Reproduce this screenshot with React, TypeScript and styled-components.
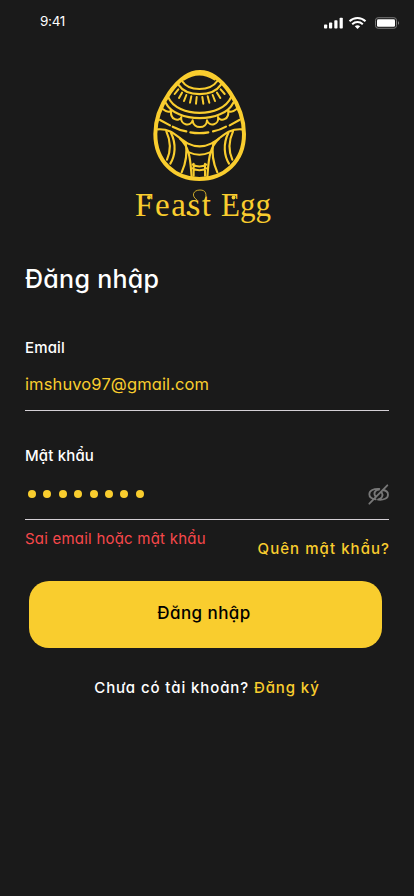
import React from 'react';
import styled, { createGlobalStyle } from 'styled-components';

const GlobalStyle = createGlobalStyle`
  * { box-sizing: border-box; }
  body { margin: 0; background: #1a1a1a; }
`;

const Screen = styled.main`
  width: 414px;
  height: 896px;
  overflow: hidden;
  background: #1a1a1a;
  color: #fff;
  display: flex;
  flex-direction: column;
  font-family: Inter, 'Noto Sans', sans-serif;
  font-feature-settings: 'cv11' 1, 'ss03' 1;
`;

const StatusBar = styled.header`
  height: 44px;
  padding: 0 15px 0 40px;
  display: flex;
  justify-content: space-between;
`;

const Clock = styled.time`
  font-size: 13.5px;
  line-height: 17px;
  padding-top: 13px;
  font-weight: 400;
  letter-spacing: -0.3px;
`;

const StatusIcons = styled.svg`
  width: 78px;
  height: 14px;
  margin-top: 16px;
`;

const Brand = styled.div`
  height: 186px;
  padding-top: 16px;
  display: flex;
  flex-direction: column;
  align-items: center;
  color: #f9cd2e;
`;

const Egg = styled.svg`
  width: 120px;
  height: 125px;
  margin-right: 14px;
  flex: none;
`;

const Wordmark = styled.svg`
  width: 155px;
  height: 50px;
  margin-top: -5px;
  margin-right: 9px;
  flex: none;
`;

const Form = styled.form`
  padding: 0 25px;
  display: flex;
  flex-direction: column;
`;

const Title = styled.h1`
  margin: 27px 0 0;
  height: 45px;
  line-height: 45px;
  font-size: 25px;
  font-weight: 500;
  letter-spacing: 0.3px;
  white-space: nowrap;
`;

const Field = styled.div<{ $top: number; $height: number }>`
  margin-top: ${(p) => p.$top}px;
  height: ${(p) => p.$height}px;
  border-bottom: 1px solid #d4d0d5;
  display: flex;
  flex-direction: column;
`;

const Label = styled.label`
  height: 20px;
  line-height: 20px;
  font-size: 15px;
  font-weight: 500;
  letter-spacing: 0.15px;
`;

const Value = styled.div`
  margin-top: 15px;
  height: 22px;
  line-height: 22px;
  font-size: 16.5px;
  letter-spacing: 0.12px;
  color: #f9cd2e;
`;

const PasswordRow = styled.div`
  margin-top: 17px;
  height: 22px;
  display: flex;
  align-items: center;
  justify-content: space-between;
`;

const Dots = styled.div`
  display: flex;
  gap: 7.4px;
  padding: 0 0 1px 3px;
`;

const Dot = styled.span`
  width: 8px;
  height: 8px;
  border-radius: 50%;
  background: #f9cd2e;
`;

const EyeOff = styled.svg`
  width: 21px;
  height: 21px;
`;

const Notes = styled.div`
  height: 61px;
  display: flex;
  justify-content: space-between;
  white-space: nowrap;
`;

const ErrorText = styled.span`
  padding-top: 9px;
  line-height: 20px;
  font-size: 15px;
  letter-spacing: 0.22px;
  color: #f7484b;
`;

const Forgot = styled.a`
  padding-top: 19px;
  margin-right: -1px;
  line-height: 20px;
  font-size: 15px;
  font-weight: 500;
  letter-spacing: 1.05px;
  color: #f9cd2e;
`;

const Submit = styled.button`
  margin: 0 7px 0 4px;
  height: 67px;
  padding: 0 3px 4px 0;
  border: 0;
  border-radius: 20px;
  background: #f9cd2e;
  color: #000;
  font: inherit;
  font-feature-settings: inherit;
  font-size: 17px;
  font-weight: 500;
  letter-spacing: 0.42px;
`;

const SignUp = styled.p`
  margin: 30px 0 0;
  line-height: 20px;
  text-align: center;
  font-size: 15px;
  font-weight: 500;
  letter-spacing: 0.9px;
  white-space: nowrap;
`;

const SignUpLink = styled.a`
  color: #f9cd2e;
`;

export default function App() {
  return (
    <Screen>
      <GlobalStyle />
      <StatusBar>
        <Clock>9:41</Clock>
        <StatusIcons viewBox="0 0 78 14" fill="#fff">
          <rect x="3" y="8.5" width="3.2" height="4" rx="0.8" />
          <rect x="8" y="6.5" width="3.2" height="6" rx="0.8" />
          <rect x="13.3" y="4.3" width="3.2" height="8.2" rx="0.8" />
          <rect x="18.6" y="1.7" width="3.2" height="10.8" rx="0.8" />
          <g fill="none" stroke="#fff" strokeWidth="2">
            <path d="M28.5 5.3 C33 1 40 1 44.5 5.3" />
            <path d="M31.2 8.2 C34.3 5.3 38.7 5.3 41.8 8.2" />
          </g>
          <path d="M33.8 10.3 C35.3 8.9 37.7 8.9 39.2 10.3 L36.5 13 Z" />
          <rect x="54.5" y="1.7" width="21" height="10.6" rx="2.6" fill="none" stroke="#777" />
          <rect x="56" y="3.2" width="18" height="7.6" rx="1.3" />
          <path d="M77 5.2 C78.3 5.8 78.3 8.2 77 8.8 Z" fill="#888" />
        </StatusIcons>
      </StatusBar>

      <Brand>
        <Egg viewBox="0 0 360 375" fill="none" stroke="currentColor" strokeWidth="6.5" strokeLinecap="round">
          <path strokeWidth="12" d="M180 36 C245 36 312 140 312 222 C312 305 252 357 178 357 C105 357 46 305 46 222 C46 140 115 36 180 36Z" />
          <path d="M132 58 Q178 28 224 58" />
          <path d="M126 63 C146 95 210 95 232 63" />
          <path d="M115 74 C140 112 217 112 243 74" />
          <path strokeWidth="6" d="M115 88 L104 102 M126 98 L117 114 M139 105 L132 123 M154 109 L150 128 M170 111 L168 131 M187 111 L190 131 M203 109 L208 128 M218 105 L225 123 M231 98 L241 114 M242 88 L254 102" />
          <path d="M85 112 C112 174 246 174 273 112" />
          <path d="M77 128 C108 190 250 190 280 128" />
          <path strokeWidth="6" d="M68 147 Q85 161 94 151 M94 151 C88 180 118 186 124 171 M124 171 C119 194 152 202 158 181 M158 181 C160 208 200 208 201 181 M201 181 C207 202 239 194 234 171 M234 171 C240 186 270 180 264 151 M264 151 Q273 161 290 147" />
          <path d="M60 180 L90 196 M98 200 Q117 210 139 214 M151 217 Q178 222 205 217 M219 214 Q241 210 258 200 M269 196 L298 180" />
          <path d="M54 208 C112 204 122 259 179 259 C235 259 247 204 305 208" />
          <path d="M79 214 C94 247 92 274 81 299 M93 219 C110 253 105 288 91 311 M279 214 C264 247 266 274 277 299 M265 219 C248 253 253 288 267 311" />
          <path d="M120 236 C152 264 151 309 155 350 M237 236 C205 264 206 309 202 350 M137 248 C143 282 137 311 125 337 M220 248 C214 282 220 311 232 337" />
          <path strokeWidth="6" d="M147 277 Q178 291 210 277 M158 314 Q178 325 199 314 M158 325 Q178 336 199 325 M161 311 V347 M195 311 V347" />
        </Egg>
        <Wordmark viewBox="0 0 155 50" fill="currentColor" fontFamily="'Liberation Serif', serif">
          <text y="36" fontSize="33">
            <tspan x="10" textLength="76" lengthAdjust="spacing">Feast</tspan>{' '}
            <tspan x="96" textLength="50" lengthAdjust="spacingAndGlyphs">Egg</tspan>
          </text>
          <path d="M72 20 C66 16 68 10 75 10 C81 10 82 14 80 21" fill="none" stroke="currentColor" strokeWidth="0.8" />
          <circle cx="24" cy="17.5" r="1.9" />
          <circle cx="63.5" cy="33" r="1.9" />
          <circle cx="108.5" cy="17.5" r="1.9" />
        </Wordmark>
      </Brand>

      <Form>
        <Title>Đăng nhập</Title>
        <Field $top={36} $height={73}>
          <Label>Email</Label>
          <Value>imshuvo97@gmail.com</Value>
        </Field>
        <Field $top={35} $height={74}>
          <Label>Mật khẩu</Label>
          <PasswordRow>
            <Dots>
              {Array.from({ length: 8 }, (_, i) => <Dot key={i} />)}
            </Dots>
            <EyeOff viewBox="0 0 63 63" fill="none" stroke="#777" strokeWidth="5.5" strokeLinecap="round">
              <path d="M23 46 C12 45 4 39 4 31 C4 19 17 14 34 15 M44 18 C55 19 60 25 60 32 C60 43 47 49 30 47 M23 38 C15 28 21 18 33 17 M41 25 C47 35 41 44 31 46 M4 59 L58 4" />
            </EyeOff>
          </PasswordRow>
        </Field>
        <Notes>
          <ErrorText>Sai email hoặc mật khẩu</ErrorText>
          <Forgot>Quên mật khẩu?</Forgot>
        </Notes>
        <Submit type="button">Đăng nhập</Submit>
        <SignUp>
          Chưa có tài khoản? <SignUpLink>Đăng ký</SignUpLink>
        </SignUp>
      </Form>
    </Screen>
  );
}
